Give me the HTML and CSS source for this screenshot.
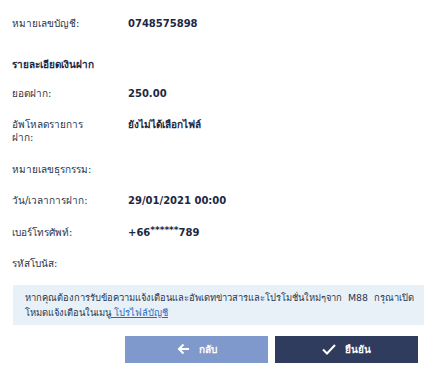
FILE: index.html
```html
<!DOCTYPE html>
<html lang="th">
<head>
  <meta charset="UTF-8">
  <meta name="viewport" content="width=device-width, initial-scale=1.0">
  <title>ยืนยันการฝากเงิน</title>
  <link rel="stylesheet" href="styles.css">
</head>
<body>
  <div class="container">
    <div class="row">
      <div class="label">หมายเลขบัญชี:</div>
      <div class="value">0748575898</div>
    </div>

    <h3 class="heading">รายละเอียดเงินฝาก</h3>

    <div class="row">
      <div class="label">ยอดฝาก:</div>
      <div class="value">250.00</div>
    </div>
    <div class="row">
      <div class="label">อัพโหลดรายการ ฝาก:</div>
      <div class="value file">ยังไม่ได้เลือกไฟล์</div>
    </div>
    <div class="row">
      <div class="label">หมายเลขธุรกรรม:</div>
      <div class="value"></div>
    </div>
    <div class="row">
      <div class="label">วัน/เวลาการฝาก:</div>
      <div class="value">29/01/2021 00:00</div>
    </div>
    <div class="row">
      <div class="label">เบอร์โทรศัพท์:</div>
      <div class="value">+66<sup>******</sup>789</div>
    </div>
    <div class="row">
      <div class="label">รหัสโบนัส:</div>
      <div class="value"></div>
    </div>

    <div class="notice">
      หากคุณต้องการรับข้อความแจ้งเตือนและอัพเดทข่าวสารและโปรโมชั่นใหม่ๆจาก&nbsp; M88 &nbsp;กรุณาเปิด โหมดแจ้งเตือนในเมนู<a href="#"> โปรไฟล์บัญชี</a>
    </div>

    <div class="actions">
      <button class="btn btn-back">
        <svg width="13" height="12" viewBox="0 0 13 12"><path d="M12 6H2M6.5 1.5L2 6l4.5 4.5" fill="none" stroke="#fff" stroke-width="2"/></svg>
        กลับ
      </button>
      <button class="btn btn-confirm">
        <svg width="14" height="11" viewBox="0 0 14 11"><path d="M1 5.5l4 4L13 1" fill="none" stroke="#fff" stroke-width="2"/></svg>
        ยืนยัน
      </button>
    </div>
  </div>
</body>
</html>
```

FILE: styles.css
```css
body {
  font-family: "DejaVu Sans", Verdana, "Noto Sans", sans-serif;
  margin: 0;
  padding: 0;
  background: #fff;
  color: #1e2a44;
}
.container {
  width: 430px;
  box-sizing: border-box;
  padding: 8px 6px 0 12px;
}
.row {
  display: grid;
  grid-template-columns: 116px 1fr;
  padding: 9px 0 9.5px;
}
.label {
  font-size: 10px;
  line-height: 13px;
  color: #2a3650;
  padding-right: 24px;
}
.value {
  font-size: 10px;
  line-height: 13px;
  font-weight: bold;
  color: #1c2843;
}
.value sup {
  font-size: 9px;
  line-height: 0;
  vertical-align: 3px;
}
.heading {
  margin: 18px 0 7px;
  font-size: 10px;
  line-height: 13px;
  font-weight: bold;
  color: #1c2843;
}
.notice {
  margin: 5px 0 0 1px;
  padding: 5px 10px 5px 12px;
  background: #e8f1f8;
  font-size: 9.4px;
  line-height: 15px;
  color: #2a3650;
  text-align: justify;
}
.notice a {
  color: #1f6bc4;
}
.actions {
  display: flex;
  justify-content: flex-end;
  gap: 7px;
  margin: 11px 6px 0 0;
}
.btn {
  width: 143px;
  height: 27px;
  border: none;
  display: flex;
  align-items: center;
  justify-content: center;
  gap: 9px;
  font-family: inherit;
  font-size: 10px;
  font-weight: bold;
  color: #fff;
  cursor: pointer;
}
.btn-back {
  background: #7f99cc;
}
.btn-confirm {
  background: #2f3c5e;
}
```
